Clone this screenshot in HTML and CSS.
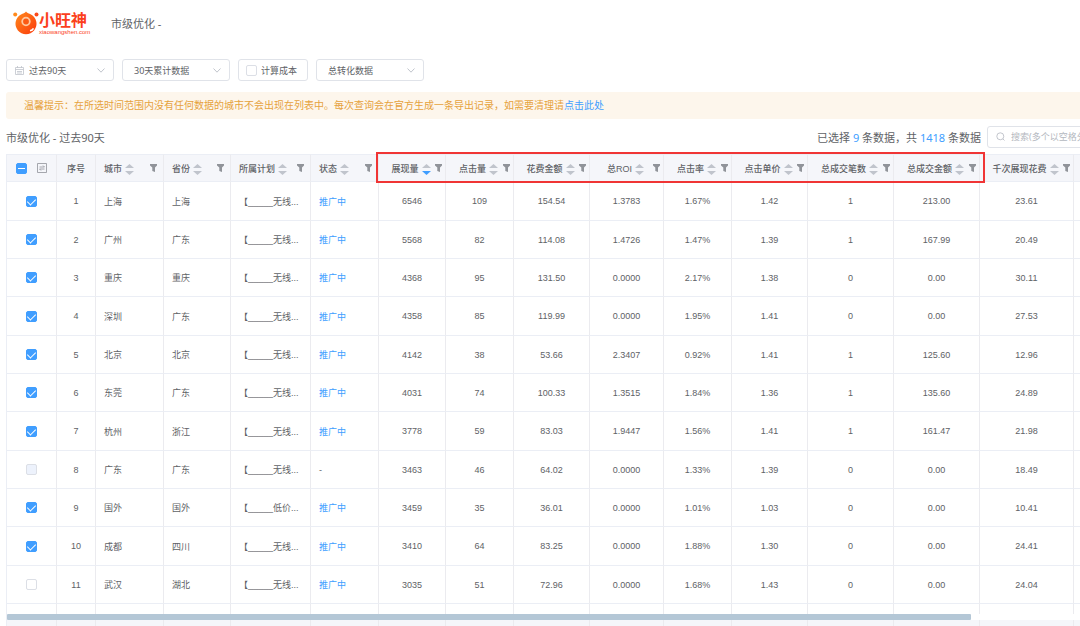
FILE: index.html
```html
<!DOCTYPE html>
<html lang="zh-CN">
<head>
    <meta charset="UTF-8">
    <meta name="viewport" content="width=device-width, initial-scale=1.0">
    <title>小旺神 - 市级优化</title>
    <link rel="stylesheet" href="styles.css">
</head>
<body>
    <svg class="symbols" aria-hidden="true">
        <symbol id="i-sort-up" viewBox="0 0 9 4"><path d="M0 4 4.5 0 9 4z"/></symbol>
        <symbol id="i-sort-down" viewBox="0 0 9 4"><path d="M0 0 4.5 4 9 0z"/></symbol>
        <symbol id="i-filter" viewBox="0 0 7 8"><path d="M0 0h7v1.500L5 3.500V8L2.300 7V3.500L0 1.500z"/></symbol>
        <symbol id="i-arrow" viewBox="0 0 8 5"><path d="M.5.5 4 4.200 7.500.5" fill="none" stroke="currentColor"/></symbol>
    </svg>

    <header class="header">
        <a class="logo" href="#" aria-label="小旺神">
            <svg width="27" height="26" viewBox="0 0 27 26" aria-hidden="true">
                <defs>
                    <linearGradient id="logoFill" x1="0" y1="0" x2="1" y2="1">
                        <stop offset="0" stop-color="#ff8a1c"/>
                        <stop offset="1" stop-color="#fb3a0c"/>
                    </linearGradient>
                </defs>
                <circle cx="2.200" cy="4.500" r="2" fill="#ff8a1c"/>
                <circle cx="23.500" cy="4.500" r="2" fill="#fb4a1c"/>
                <path d="M13 1.500c1 1.500 3 2 5 3a10.500 10.500 0 1 1-10 0c2-1 4-1.500 5-3z" fill="url(#logoFill)"/>
                <circle cx="13" cy="11.500" r="3.800" fill="#fb5a14" stroke="#ffc9a0" stroke-width="1.800"/>
                <path d="M17 20.800q2.500-.5 3.500-2.500" fill="none" stroke="#fff" stroke-width="1.500"/>
            </svg>
            <span class="logo-text">
                <span class="logo-name">小旺神</span>
                <span class="logo-url">xiaowangshen.com</span>
            </span>
        </a>
        <span class="header-title">市级优化 -</span>
    </header>

    <main class="main">
        <form class="filters">
            <div class="select has-icon">
                <svg class="select-icon" width="9" height="9" viewBox="0 0 9 9" aria-hidden="true">
                    <path d="M.5 1.500h8v7h-8zM.5 3.500h8M2.500 0v2M6.500 0v2M2 5.500h5M2 7h5" fill="none" stroke="#c0c4cc" stroke-width=".8"/>
                </svg>
                <select aria-label="时间范围"><option>过去90天</option></select>
                <svg class="select-arrow" width="8" height="5"><use href="#i-arrow"/></svg>
            </div>
            <div class="select">
                <select aria-label="累计数据"><option>30天累计数据</option></select>
                <svg class="select-arrow" width="8" height="5"><use href="#i-arrow"/></svg>
            </div>
            <label class="check-box"><input type="checkbox"> 计算成本</label>
            <div class="select">
                <select aria-label="转化数据"><option>总转化数据</option></select>
                <svg class="select-arrow" width="8" height="5"><use href="#i-arrow"/></svg>
            </div>
        </form>

        <p class="tip">温馨提示：在所选时间范围内没有任何数据的城市不会出现在列表中。每次查询会在官方生成一条导出记录，如需要清理请<a href="#">点击此处</a></p>

        <div class="toolbar">
            <span>市级优化 - 过去90天</span>
            <span class="count">已选择 <b>9</b> 条数据，共 <b>1418</b> 条数据</span>
            <label class="search">
                <svg width="9" height="9" viewBox="0 0 9 9" aria-hidden="true">
                    <path d="M7.800 4.300a3.500 3.500 0 1 1-7 0 3.500 3.500 0 0 1 7 0zM6.800 6.800 8.500 8.500" fill="none" stroke="#b4b8c0" stroke-width=".8"/>
                </svg>
                <input type="text" aria-label="搜索" placeholder="搜索(多个以空格分隔)">
            </label>
        </div>

        <div class="table-wrap">
            <table class="table">
                <colgroup id="cols"></colgroup>
                <thead><tr id="head"></tr></thead>
                <tbody id="rows"></tbody>
                <tfoot>
                    <tr class="scroll-row"><td colspan="16"><div class="scrollbar"></div></td></tr>
                    <tr class="sum-row" id="sum"></tr>
                </tfoot>
            </table>
            <div class="highlight"></div>
        </div>
    </main>

    <script>
        // name, width, align
        const columns = [
            ['', 50, 'center'],
            ['序号', 39, 'center'],
            ['城市', 68, 'left'],
            ['省份', 67, 'left'],
            ['所属计划', 80, 'left'],
            ['状态', 68, 'left'],
            ['展现量', 67, 'center'],
            ['点击量', 68, 'center'],
            ['花费金额', 76, 'center'],
            ['总ROI', 74, 'center'],
            ['点击率', 68, 'center'],
            ['点击单价', 76, 'center'],
            ['总成交笔数', 86, 'center'],
            ['总成交金额', 86, 'center'],
            ['千次展现花费', 94, 'center'],
            ['', 80, 'center']
        ];

        const data = [
            ['上海', '上海', '无线', '推广中', '6546', '109', '154.54', '1.3783', '1.67%', '1.42', '1', '213.00', '23.61'],
            ['广州', '广东', '无线', '推广中', '5568', '82', '114.08', '1.4726', '1.47%', '1.39', '1', '167.99', '20.49'],
            ['重庆', '重庆', '无线', '推广中', '4368', '95', '131.50', '0.0000', '2.17%', '1.38', '0', '0.00', '30.11'],
            ['深圳', '广东', '无线', '推广中', '4358', '85', '119.99', '0.0000', '1.95%', '1.41', '0', '0.00', '27.53'],
            ['北京', '北京', '无线', '推广中', '4142', '38', '53.66', '2.3407', '0.92%', '1.41', '1', '125.60', '12.96'],
            ['东莞', '广东', '无线', '推广中', '4031', '74', '100.33', '1.3515', '1.84%', '1.36', '1', '135.60', '24.89'],
            ['杭州', '浙江', '无线', '推广中', '3778', '59', '83.03', '1.9447', '1.56%', '1.41', '1', '161.47', '21.98'],
            ['广东', '广东', '无线', '-', '3463', '46', '64.02', '0.0000', '1.33%', '1.39', '0', '0.00', '18.49'],
            ['国外', '国外', '低价', '推广中', '3459', '35', '36.01', '0.0000', '1.01%', '1.03', '0', '0.00', '10.41'],
            ['成都', '四川', '无线', '推广中', '3410', '64', '83.25', '0.0000', '1.88%', '1.30', '0', '0.00', '24.41'],
            ['武汉', '湖北', '无线', '推广中', '3035', '51', '72.96', '0.0000', '1.68%', '1.43', '0', '0.00', '24.04']
        ];

        const icon = (id, w, h, cls) => `<svg class="${cls}" width="${w}" height="${h}"><use href="#${id}"/></svg>`;

        function headCell([name, , align], i) {
            if (i === 0) {
                return `<th><div class="select-all">
                    <input type="checkbox" class="partial" aria-label="全选">
                    <svg width="10" height="10" viewBox="0 0 10 10"><path d="M.5.5h9v9h-9zM2.500 4h5L6 2.500M7.500 6h-5L4 7.500" fill="none" stroke="#909399" stroke-width=".8"/></svg>
                </div></th>`;
            }
            if (i === 1 || !name) return `<th>${name}</th>`;
            const active = name === '展现量' ? ' desc' : '';
            return `<th class="${align}"><div class="th">
                <span class="th-label">${name}<span class="sort${active}">${icon('i-sort-up', 9, 4, 'up')}${icon('i-sort-down', 9, 4, 'down')}</span></span>
                ${icon('i-filter', 7, 8, 'filter')}
            </div></th>`;
        }

        function row(r, i) {
            const state = r[3] === '-' ? 'disabled' : (i < 10 ? 'checked' : '');
            const status = r[3] === '-' ? '-' : `<span class="running">${r[3]}</span>`;
            return `<tr>
                <td><input type="checkbox" aria-label="${r[0]}" ${state}></td>
                <td>${i + 1}</td>
                <td class="left">${r[0]}</td>
                <td class="left">${r[1]}</td>
                <td class="left">【_____${r[2]}...</td>
                <td class="left">${status}</td>
                ${r.slice(4).map(v => `<td>${v}</td>`).join('')}
                <td></td>
            </tr>`;
        }

        const blank = columns.map(() => '<td></td>').join('');
        document.getElementById('cols').innerHTML = columns.map(c => `<col style="width:${c[1]}px">`).join('');
        document.getElementById('head').innerHTML = columns.map(headCell).join('');
        document.getElementById('rows').innerHTML = data.map(row).join('') + `<tr class="cut">${blank}</tr>`;
        document.getElementById('sum').innerHTML = blank;
    </script>
</body>
</html>
```
FILE: styles.css
```css
* {
    box-sizing: border-box;
}

body {
    margin: 0;
    font-family: "Noto Sans", "Noto Sans CJK SC", sans-serif;
    font-size: 9px;
    color: #606266;
    background: #fff;
}

a {
    color: #409eff;
    text-decoration: none;
}

.symbols {
    display: none;
}

.header {
    display: flex;
    align-items: center;
    height: 46px;
    padding-left: 13px;
    gap: 24px;
}

.logo {
    display: flex;
    align-items: center;
    color: #fb3f1c;
}

.logo-text {
    display: flex;
    flex-direction: column;
    width: 48px;
    margin-left: -1px;
    white-space: nowrap;
}

.logo-name {
    font-size: 16px;
    line-height: 18px;
    font-weight: 700;
}

.logo-url {
    font-size: 6px;
    line-height: 6px;
    font-family: "Liberation Sans", sans-serif;
}

.header-title {
    font-size: 11px;
}

.main {
    height: calc(100vh - 46px);
    padding-left: 6px;
    overflow: hidden;
}

/* filters */
.filters {
    display: flex;
    gap: 8px;
    padding-top: 13px;
}

.select,
.check-box {
    display: flex;
    align-items: center;
    height: 22px;
    border: 1px solid #e0e3e9;
    border-radius: 3px;
}

.select {
    width: 108px;
    padding: 0 8px 0 11px;
}

.select.has-icon {
    padding-left: 8px;
    gap: 5px;
}

.select select {
    flex: 1;
    min-width: 0;
    padding: 0;
    border: 0;
    outline: none;
    appearance: none;
    background: none;
    font: inherit;
    color: inherit;
}

.select-arrow {
    color: #c0c4cc;
}

.check-box {
    width: 70px;
    padding-left: 7px;
    gap: 4px;
}

input[type="checkbox"] {
    display: inline-grid;
    place-items: center;
    appearance: none;
    width: 11px;
    height: 11px;
    margin: 0;
    border: 1px solid #dcdfe6;
    border-radius: 2px;
    background: #fff;
    vertical-align: middle;
}

input[type="checkbox"]:checked,
input[type="checkbox"].partial {
    background: #409eff;
    border-color: #409eff;
}

input[type="checkbox"]:checked::after {
    content: "";
    width: 4px;
    height: 7px;
    margin-bottom: 2px;
    border: solid #fff;
    border-width: 0 1px 1px 0;
    transform: rotate(45deg);
}

input[type="checkbox"].partial::after {
    content: "";
    width: 7px;
    height: 1px;
    background: #fff;
}

input[type="checkbox"]:disabled {
    background: #edf2fc;
}

.tip {
    margin: 11px 0 0;
    padding-left: 18px;
    font-size: 10px;
    line-height: 27px;
    color: #e6a23c;
    background: #fdf6ec;
    border-radius: 3px 0 0 3px;
}

/* toolbar */
.toolbar {
    display: flex;
    align-items: center;
    height: 35px;
    font-size: 11px;
}

.count {
    margin-left: auto;
}

.count b {
    font-weight: 400;
    color: #409eff;
}

.search {
    display: flex;
    flex: none;
    align-items: center;
    gap: 6px;
    width: 140px;
    height: 22px;
    margin-left: 6px;
    margin-right: -47px;
    padding-left: 8px;
    border: 1px solid #e0e3e9;
    border-radius: 3px;
}

.search input {
    flex: 1;
    min-width: 0;
    padding: 0;
    border: 0;
    outline: none;
    font: inherit;
    font-size: 9px;
}

.search input::placeholder {
    color: #b4b8c0;
}

/* table */
.table-wrap {
    position: relative;
}

.table {
    width: 1147px;
    table-layout: fixed;
    border-collapse: separate;
    border-spacing: 0;
    border-left: 1px solid #ebeef5;
    font-family: "Liberation Sans", "Noto Sans CJK SC", sans-serif;
}

.table th,
.table td {
    padding: 0;
    border-right: 1px solid #ebebef;
    border-bottom: 1px solid #ebeef5;
    text-align: center;
    white-space: nowrap;
}

.table th {
    height: 28px;
    border-top: 1px solid #ebeef5;
    background: #f5f6fa;
    font-weight: 500;
}

.table td {
    height: 38px;
}

.table tbody tr:nth-child(3n+1) td {
    height: 39px;
}

.table .left {
    padding-left: 8px;
    text-align: left;
}

.th {
    display: flex;
    align-items: center;
    padding: 0 3px 0 8px;
}

.left .th {
    padding: 0 6px 0 0;
}

.th-label {
    display: flex;
    flex: 1;
    align-items: center;
    justify-content: center;
    gap: 3px;
}

.left .th-label {
    justify-content: flex-start;
}

.sort {
    display: flex;
    flex-direction: column;
    gap: 3px;
    padding-top: 2px;
    fill: #c0c4cc;
}

.sort.desc .down {
    fill: #409eff;
}

.filter {
    flex: none;
    fill: #909399;
}

.select-all {
    display: flex;
    align-items: center;
    justify-content: center;
    gap: 10px;
}

.running {
    color: #409eff;
}

.table tbody .cut td {
    height: 10px;
    border-bottom: 0;
}

.table .scroll-row td {
    height: 6px;
    border: 0;
}

.scrollbar {
    width: 964px;
    height: 6px;
    border-radius: 1px;
    background: #b4c7d6;
}

.table .sum-row td {
    background: #f5f6fa;
}

.highlight {
    position: absolute;
    top: -2px;
    left: 370px;
    width: 609px;
    height: 31px;
    border: 2px solid #f03535;
    pointer-events: none;
}
```
